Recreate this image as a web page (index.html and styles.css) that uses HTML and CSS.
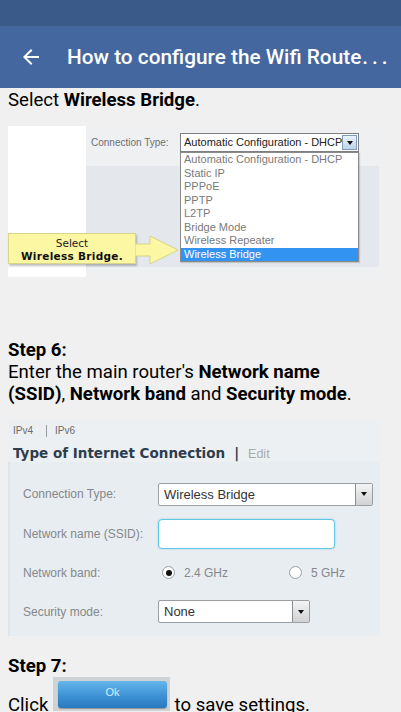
FILE: index.html
```html
<!DOCTYPE html>
<html>
<head>
<meta charset="utf-8">
<link rel="stylesheet" href="styles.css">
</head>
<body>
<div class="status"></div>
<header class="appbar">
  <svg class="back" viewBox="0 0 24 24"><path d="M20 11H7.83l5.59-5.59L12 4l-8 8 8 8 1.41-1.41L7.83 13H20v-2z" fill="#fff"/></svg>
  <h1 class="title">How to configure the Wifi Route<span class="dots">...</span></h1>
</header>
<main class="content">
  <p class="para first">Select <b>Wireless Bridge</b>.</p>

  <div class="shot1">
    <div class="s1-white"></div>
    <div class="s1-panel">
      <div class="s1-row">
        <span class="s1-label">Connection Type:</span>
        <div class="s1-select">
          <span class="s1-value">Automatic Configuration - DHCP</span>
          <span class="s1-btn"><i class="tri"></i></span>
          <ul class="s1-list">
            <li>Automatic Configuration - DHCP</li>
            <li>Static IP</li>
            <li>PPPoE</li>
            <li>PPTP</li>
            <li>L2TP</li>
            <li>Bridge Mode</li>
            <li>Wireless Repeater</li>
            <li class="sel">Wireless Bridge</li>
          </ul>
        </div>
      </div>
    </div>
    <div class="callout">
      <span>Select</span>
      <b>Wireless Bridge.</b>
    </div>
    <svg class="callout-arrow" viewBox="0 0 44 30" width="44" height="30"><polygon points="0,9 15,9 15,1 43,15 15,29 15,21 0,21" fill="#fbf7a2" stroke="#d9d48a" stroke-width="1"/></svg>
  </div>

  <p class="para step6"><b>Step 6:</b><br>Enter the main router's <b>Network name (SSID)</b>, <b>Network band</b> and <b>Security mode</b>.</p>

  <div class="shot2">
    <div class="s2-head">
      <div class="s2-tabs"><span>IPv4</span><span class="sep"></span><span>IPv6</span></div>
      <div class="s2-title"><b>Type of Internet Connection</b><span class="bar">|</span><span class="edit">Edit</span></div>
    </div>
    <div class="s2-form">
      <span class="s2-label">Connection Type:</span>
      <div class="s2-ctl"><div class="s2-select wide"><span>Wireless Bridge</span><span class="s2-btn"><i class="tri"></i></span></div></div>
      <span class="s2-label">Network name (SSID):</span>
      <div class="s2-ctl"><div class="s2-input"></div></div>
      <span class="s2-label">Network band:</span>
      <div class="s2-ctl radios">
        <span class="opt first-opt"><i class="radio on"></i>2.4 GHz</span>
        <span class="opt"><i class="radio"></i>5 GHz</span>
      </div>
      <span class="s2-label">Security mode:</span>
      <div class="s2-ctl"><div class="s2-select narrow"><span>None</span><span class="s2-btn"><i class="tri"></i></span></div></div>
    </div>
  </div>

  <p class="para step7"><b>Step 7:</b><br>Click <span class="okbtn"><span class="okinner">Ok</span></span> to save settings.</p>
</main>
</body>
</html>
```

FILE: styles.css
```css
* { box-sizing: border-box; margin: 0; padding: 0; }
html, body { background: #f0f0f0; }
body {
  width: 401px;
  height: 712px;
  overflow: hidden;
  font-family: Roboto, "Noto Sans", sans-serif;
  color: #000;
}
.status { height: 26px; background: #3a5b8a; }
.appbar {
  height: 62px;
  background: #4467a0;
  display: flex;
  align-items: center;
  padding-left: 19px;
}
.back { width: 24px; height: 24px; flex: none; }
.title {
  margin-left: 24px;
  font-size: 20.8px;
  font-weight: 500;
  color: #fff;
  white-space: nowrap;
}
.dots { letter-spacing: 4px; margin-left: 1px; }
.content { padding: 0 20px 0 8px; }
.para { font-size: 18.6px; line-height: 22px; }
.para b { font-weight: 700; }
.first { padding-top: 1px; }

/* screenshot 1 */
.shot1 {
  position: relative;
  margin-top: 15px;
  width: 371px;
  height: 151px;
  display: flex;
  background: #eef0f2;
}
.s1-white { width: 78px; background: #fff; }
.s1-panel {
  flex: 1;
  background: linear-gradient(to bottom, #eef0f2 0 40px, #e4e8ec 40px 141px, #eef0f2 141px);
  padding: 7px 0 0 5px;
}
.s1-row { display: flex; align-items: flex-start; }
.s1-label {
  width: 89px;
  font: 10px/19px "Liberation Sans", Arial, sans-serif;
  color: #6d6f72;
}
.s1-select {
  position: relative;
  width: 179px;
  height: 19px;
  background: #fff;
  border: 1px solid #7d7f82;
  font: 11px/17px "Liberation Sans", Arial, sans-serif;
  color: #222;
  padding-left: 3px;
}
.s1-btn {
  position: absolute;
  right: 1px;
  top: 1px;
  width: 15px;
  height: 15px;
  border: 1px solid #7f9db9;
  background: linear-gradient(#eaf2fb, #bcd3ea);
  display: flex;
  align-items: center;
  justify-content: center;
}
.tri {
  display: block;
  width: 0;
  height: 0;
  border-left: 3px solid transparent;
  border-right: 3px solid transparent;
  border-top: 4px solid #111;
}
.s1-list {
  position: absolute;
  left: -1px;
  top: 18px;
  width: 179px;
  list-style: none;
  background: #fff;
  border: 1px solid #8a8a8a;
  font: 11px/13.5px "Liberation Sans", Arial, sans-serif;
  color: #7a7a7a;
  box-shadow: 1px 1px 1px rgba(0,0,0,0.15);
}
.s1-list li { padding-left: 3px; height: 13.5px; }
.s1-list li.sel { background: #3393f0; color: #fff; }
.callout {
  position: absolute;
  left: 0;
  top: 107px;
  width: 128px;
  height: 31px;
  background: #fbf7a2;
  border: 1px solid #d9d48a;
  box-shadow: 1px 2px 2px rgba(0,0,0,0.25);
  display: flex;
  flex-direction: column;
  align-items: center;
  padding-top: 3px;
  font: 10.5px/13px "DejaVu Sans", Verdana, sans-serif;
  color: #222;
}
.callout b { font-weight: 700; font-size: 10.5px; letter-spacing: 0.3px; color: #111; }
.callout-arrow { position: absolute; left: 127px; top: 109px; }

/* step 6 */
.step6 { margin-top: 62px; }

/* screenshot 2 */
.shot2 {
  margin-top: 15px;
  width: 372px;
  height: 216px;
  background: #edf0f2;
  display: flex;
  flex-direction: column;
}
.s2-head { height: 42px; padding: 5px 0 0 5px; }
.s2-tabs {
  display: flex;
  align-items: center;
  height: 12px;
  font: 10px/12px "Liberation Sans", Arial, sans-serif;
  color: #6a6d70;
}
.sep { width: 1px; height: 12px; background: #9a9da0; margin: 0 8px 0 13px; }
.s2-title {
  margin-top: 7px;
  display: flex;
  align-items: baseline;
  font: 13.5px/18px "DejaVu Sans", Verdana, sans-serif;
  color: #2e3d4e;
}
.s2-title b { font-weight: 700; }
.bar { font-weight: 700; margin: 0 9px 0 9px; }
.edit { font: 12.5px "Liberation Sans", Arial, sans-serif; color: #a8abae; }
.s2-form {
  flex: 1;
  background: #e8edf1;
  border-left: 2px solid #e1e5e9;
  padding: 12px 0 0 13px;
  display: grid;
  grid-template-columns: 135px 1fr;
  grid-template-rows: 40px 39px 39px 39px;
  align-items: center;
}
.s2-label { font: 12px "Liberation Sans", Arial, sans-serif; color: #85888b; }
.s2-ctl { display: flex; align-items: center; }
.s2-select {
  position: relative;
  height: 23px;
  background: #fff;
  border: 1px solid #9b9ea1;
  border-radius: 2px;
  font: 13px/21px "Liberation Sans", Arial, sans-serif;
  color: #333;
  padding-left: 5px;
}
.s2-select.wide { width: 215px; }
.s2-select.narrow { width: 152px; }
.s2-btn {
  position: absolute;
  right: 0;
  top: 0;
  width: 17px;
  height: 21px;
  border-left: 1px solid #8a8d90;
  background: linear-gradient(#f4f4f4, #d0d2d4);
  display: flex;
  align-items: center;
  justify-content: center;
}
.s2-input {
  width: 177px;
  height: 30px;
  background: #fff;
  border: 1.5px solid #5fc6e3;
  border-radius: 4px;
  box-shadow: 0 0 2px rgba(95,198,227,0.6);
}
.radios { font: 12px "Liberation Sans", Arial, sans-serif; color: #85888b; }
.opt { display: flex; align-items: center; }
.first-opt { width: 127px; }
.radio {
  display: block;
  width: 13px;
  height: 13px;
  border: 1px solid #9a9da0;
  border-radius: 50%;
  background: #fff;
  margin: 0 9px 0 4px;
  position: relative;
}
.radio.on::after {
  content: "";
  position: absolute;
  left: 2.5px;
  top: 2.5px;
  width: 6px;
  height: 6px;
  border-radius: 50%;
  background: #111;
}

/* step 7 */
.step7 { margin-top: 19px; }
.okbtn {
  display: inline-block;
  vertical-align: baseline;
  overflow: hidden;
  width: 117px;
  height: 34px;
  background: #cfd3d6;
  padding: 4px 3px 0 5px;
}
.okinner {
  display: block;
  height: 27px;
  border-radius: 3px;
  background: linear-gradient(#64b6ea, #3a8fd3 60%, #2a78bd);
  box-shadow: 0 1px 1px rgba(0,0,0,0.3);
  color: #d8eefc;
  font: 11px/22px "Liberation Sans", Arial, sans-serif;
  text-align: center;
}
```
